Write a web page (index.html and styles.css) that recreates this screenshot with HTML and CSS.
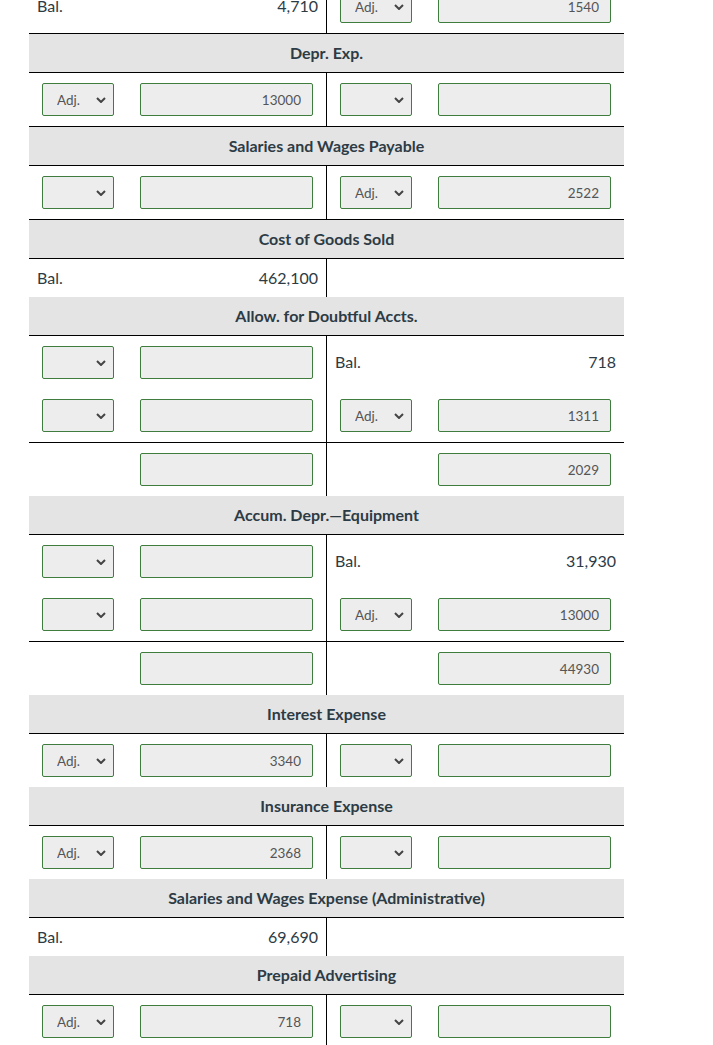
FILE: index.html
```html
<!DOCTYPE html>
<html>
<head>
<meta charset="utf-8">
<link rel="stylesheet" href="styles.css">
</head>
<body>
<div class="ledger">

  <div class="row tall bb">
    <div class="cell left text"><span>Bal.</span><span>4,710</span></div>
    <div class="cell right"><div class="sel"><select><option>Adj.</option></select><svg class="chev" viewBox="0 0 10 6"><path d="M1 1 L5 5 L9 1"/></svg></div><input class="amt" value="1540" readonly></div>
  </div>

  <div class="head">Depr. Exp.</div>
  <div class="row tall bb">
    <div class="cell left"><div class="sel"><select><option>Adj.</option></select><svg class="chev" viewBox="0 0 10 6"><path d="M1 1 L5 5 L9 1"/></svg></div><input class="amt" value="13000" readonly></div>
    <div class="cell right"><div class="sel"><select><option></option></select><svg class="chev" viewBox="0 0 10 6"><path d="M1 1 L5 5 L9 1"/></svg></div><input class="amt" value="" readonly></div>
  </div>

  <div class="head">Salaries and Wages Payable</div>
  <div class="row tall bb">
    <div class="cell left"><div class="sel"><select><option></option></select><svg class="chev" viewBox="0 0 10 6"><path d="M1 1 L5 5 L9 1"/></svg></div><input class="amt" value="" readonly></div>
    <div class="cell right"><div class="sel"><select><option>Adj.</option></select><svg class="chev" viewBox="0 0 10 6"><path d="M1 1 L5 5 L9 1"/></svg></div><input class="amt" value="2522" readonly></div>
  </div>

  <div class="head">Cost of Goods Sold</div>
  <div class="row short">
    <div class="cell left text"><span>Bal.</span><span>462,100</span></div>
    <div class="cell right"></div>
  </div>

  <div class="head">Allow. for Doubtful Accts.</div>
  <div class="row tall">
    <div class="cell left"><div class="sel"><select><option></option></select><svg class="chev" viewBox="0 0 10 6"><path d="M1 1 L5 5 L9 1"/></svg></div><input class="amt" value="" readonly></div>
    <div class="cell right text"><span>Bal.</span><span>718</span></div>
  </div>
  <div class="row tall bb">
    <div class="cell left"><div class="sel"><select><option></option></select><svg class="chev" viewBox="0 0 10 6"><path d="M1 1 L5 5 L9 1"/></svg></div><input class="amt" value="" readonly></div>
    <div class="cell right"><div class="sel"><select><option>Adj.</option></select><svg class="chev" viewBox="0 0 10 6"><path d="M1 1 L5 5 L9 1"/></svg></div><input class="amt" value="1311" readonly></div>
  </div>
  <div class="row tall">
    <div class="cell left"><div class="spacer"></div><input class="amt" value="" readonly></div>
    <div class="cell right"><div class="spacer"></div><input class="amt" value="2029" readonly></div>
  </div>

  <div class="head">Accum. Depr.—Equipment</div>
  <div class="row tall">
    <div class="cell left"><div class="sel"><select><option></option></select><svg class="chev" viewBox="0 0 10 6"><path d="M1 1 L5 5 L9 1"/></svg></div><input class="amt" value="" readonly></div>
    <div class="cell right text"><span>Bal.</span><span>31,930</span></div>
  </div>
  <div class="row tall bb">
    <div class="cell left"><div class="sel"><select><option></option></select><svg class="chev" viewBox="0 0 10 6"><path d="M1 1 L5 5 L9 1"/></svg></div><input class="amt" value="" readonly></div>
    <div class="cell right"><div class="sel"><select><option>Adj.</option></select><svg class="chev" viewBox="0 0 10 6"><path d="M1 1 L5 5 L9 1"/></svg></div><input class="amt" value="13000" readonly></div>
  </div>
  <div class="row tall">
    <div class="cell left"><div class="spacer"></div><input class="amt" value="" readonly></div>
    <div class="cell right"><div class="spacer"></div><input class="amt" value="44930" readonly></div>
  </div>

  <div class="head">Interest Expense</div>
  <div class="row tall">
    <div class="cell left"><div class="sel"><select><option>Adj.</option></select><svg class="chev" viewBox="0 0 10 6"><path d="M1 1 L5 5 L9 1"/></svg></div><input class="amt" value="3340" readonly></div>
    <div class="cell right"><div class="sel"><select><option></option></select><svg class="chev" viewBox="0 0 10 6"><path d="M1 1 L5 5 L9 1"/></svg></div><input class="amt" value="" readonly></div>
  </div>

  <div class="head">Insurance Expense</div>
  <div class="row tall">
    <div class="cell left"><div class="sel"><select><option>Adj.</option></select><svg class="chev" viewBox="0 0 10 6"><path d="M1 1 L5 5 L9 1"/></svg></div><input class="amt" value="2368" readonly></div>
    <div class="cell right"><div class="sel"><select><option></option></select><svg class="chev" viewBox="0 0 10 6"><path d="M1 1 L5 5 L9 1"/></svg></div><input class="amt" value="" readonly></div>
  </div>

  <div class="head">Salaries and Wages Expense (Administrative)</div>
  <div class="row short">
    <div class="cell left text"><span>Bal.</span><span>69,690</span></div>
    <div class="cell right"></div>
  </div>

  <div class="head">Prepaid Advertising</div>
  <div class="row tall">
    <div class="cell left"><div class="sel"><select><option>Adj.</option></select><svg class="chev" viewBox="0 0 10 6"><path d="M1 1 L5 5 L9 1"/></svg></div><input class="amt" value="718" readonly></div>
    <div class="cell right"><div class="sel"><select><option></option></select><svg class="chev" viewBox="0 0 10 6"><path d="M1 1 L5 5 L9 1"/></svg></div><input class="amt" value="" readonly></div>
  </div>

</div>
</body>
</html>
```

FILE: styles.css
```css
html, body {
  margin: 0;
  padding: 0;
  background: #ffffff;
}
body {
  font-family: Lato, "Open Sans", sans-serif;
  color: #2d3b45;
  overflow: hidden;
}
.ledger {
  width: 595px;
  margin: -20px 0 0 29px;
}
.head {
  box-sizing: border-box;
  height: 39px;
  padding-bottom: 2px;
  border-bottom: 1px solid #000;
  background: #e4e4e4;
  display: flex;
  align-items: center;
  justify-content: center;
  font-weight: bold;
  font-size: 16px;
  color: #2d3b45;
}
.row {
  display: flex;
}
.row.tall .cell { height: 53px; }
.row.short .cell { height: 38px; }
.row.bb { border-bottom: 1px solid #000; }
.cell {
  box-sizing: border-box;
  display: flex;
  align-items: center;
  padding: 0 13px;
  gap: 26px;
}
.cell.left {
  width: 298px;
  border-right: 1px solid #000;
}
.cell.right {
  width: 297px;
}
.cell.text {
  justify-content: space-between;
  padding: 0 8px 2px 8px;
  font-size: 16px;
  color: #2d3b45;
}
.sel {
  position: relative;
  width: 72px;
  height: 33px;
  flex: none;
}
.sel select {
  appearance: none;
  -webkit-appearance: none;
  box-sizing: border-box;
  width: 72px;
  height: 33px;
  margin: 0;
  border: 1px solid #3e7d3e;
  border-radius: 2px;
  background: #ededed;
  font-family: Lato, sans-serif;
  font-size: 13.5px;
  color: #555;
  padding: 0 0 0 14px;
  outline: none;
}
.chev {
  position: absolute;
  right: 8px;
  top: 14px;
  width: 10px;
  height: 6px;
  pointer-events: none;
}
.chev path {
  fill: none;
  stroke: #444;
  stroke-width: 2;
}
.spacer {
  width: 72px;
  flex: none;
}
.amt {
  box-sizing: border-box;
  width: 173px;
  height: 33px;
  margin: 0;
  flex: none;
  border: 1px solid #3e7d3e;
  border-radius: 2px;
  background: #ededed;
  font-family: Lato, sans-serif;
  font-size: 13.5px;
  color: #555;
  text-align: right;
  padding: 0 11px 0 6px;
  outline: none;
}
```
